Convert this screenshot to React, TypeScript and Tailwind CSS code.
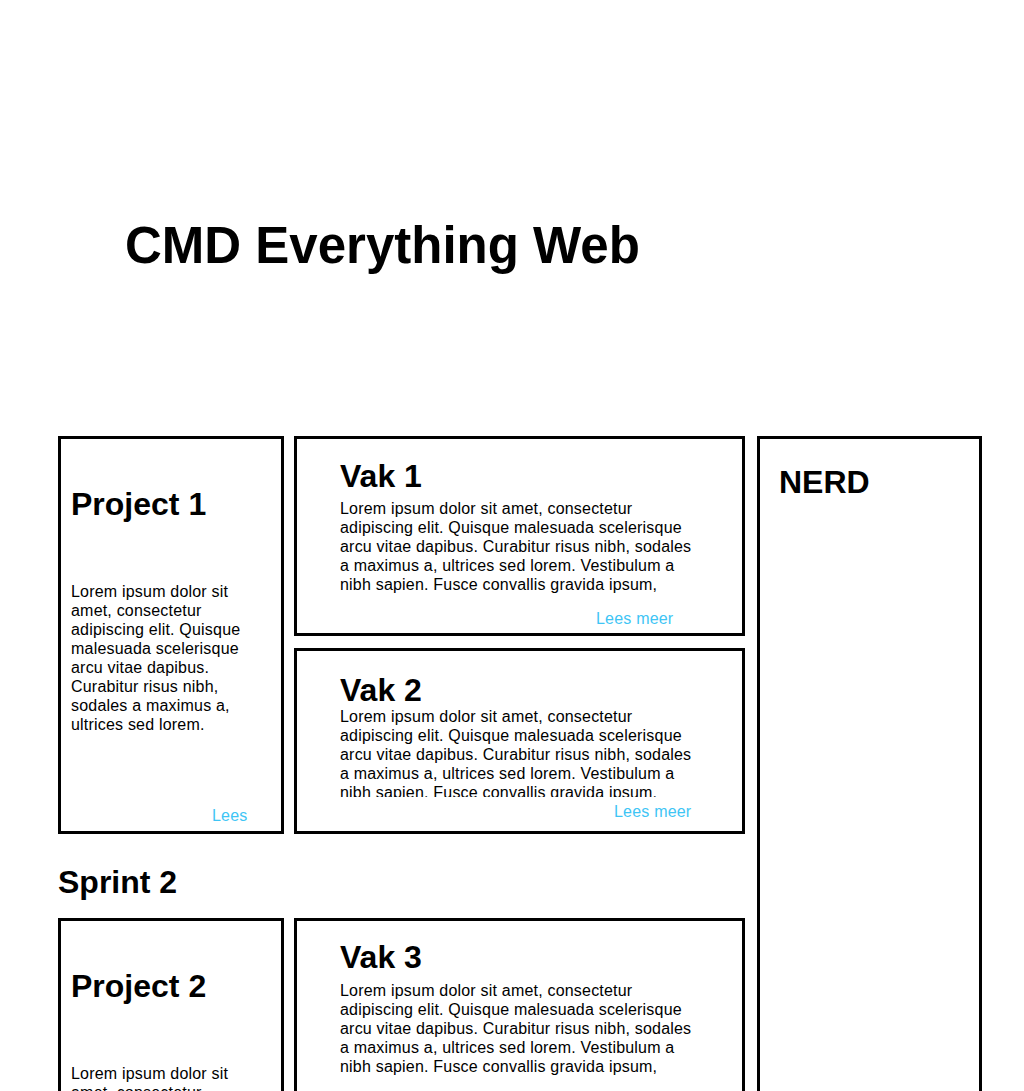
const lorem =
  "Lorem ipsum dolor sit amet, consectetur adipiscing elit. Quisque malesuada scelerisque arcu vitae dapibus. Curabitur risus nibh, sodales a maximus a, ultrices sed lorem. Vestibulum a nibh sapien. Fusce convallis gravida ipsum, consequat tempor nunc porta vel. Sed ut nisl vel lectus.";

const short =
  "Lorem ipsum dolor sit amet, consectetur adipiscing elit. Quisque malesuada scelerisque arcu vitae dapibus. Curabitur risus nibh, sodales a maximus a, ultrices sed lorem.";

function ProjectCard({ title }: { title: string }) {
  return (
    <div className="row-span-2 flex flex-col border-[3px] border-black pl-[10px]">
      <h2 className="mt-[49px] text-[32px] font-bold leading-none">{title}</h2>
      <p className="mt-[62px] w-[190px] text-[16px] leading-[19px] tracking-[0.2px]">{short}</p>
      <a
        href="#"
        className="mt-auto mb-[6px] ml-[141px] h-[19px] w-[60px] overflow-hidden text-[16px] leading-[19px] tracking-[0.2px] text-[#3ec5f5]"
      >
        Lees meer
      </a>
    </div>
  );
}

export default function App() {
  return (
    <div
      className="h-screen overflow-hidden bg-white text-black"
      style={{ fontFamily: '"Liberation Sans", Arial, sans-serif' }}
    >
      <header className="pt-[220px] pl-[125px]">
        <h1 className="text-[51px] font-bold leading-none">CMD Everything Web</h1>
      </header>

      <main className="mt-[165px] ml-[58px] flex gap-[12px]">
        <div className="w-[687px]">
          <div className="grid grid-cols-[226px_451px] gap-x-[10px] gap-y-[12px]">
            <ProjectCard title="Project 1" />

            {/* Vak 1 */}
            <div className="flex h-[200px] flex-col border-[3px] border-black pl-[43px]">
              <h2 className="mt-[21px] text-[32px] font-bold leading-none">Vak 1</h2>
              <p className="mt-[7px] h-[95px] w-[358px] overflow-hidden text-[16px] leading-[19px] tracking-[0.2px]">
                {lorem}
              </p>
              <a href="#" className="mt-[15px] ml-[256px] text-[16px] leading-[19px] tracking-[0.2px] text-[#3ec5f5]">
                Lees meer
              </a>
            </div>

            {/* Vak 2 */}
            <div className="flex h-[186px] flex-col border-[3px] border-black pl-[43px]">
              <h2 className="mt-[23px] text-[32px] font-bold leading-none">Vak 2</h2>
              <p className="mt-[1px] h-[90px] w-[358px] overflow-hidden text-[16px] leading-[19px] tracking-[0.2px]">
                {lorem}
              </p>
              <a href="#" className="mt-[5px] ml-[274px] text-[16px] leading-[19px] tracking-[0.2px] text-[#3ec5f5]">
                Lees meer
              </a>
            </div>
          </div>

          <h2 className="mt-[32px] text-[32px] font-bold leading-none">Sprint 2</h2>

          <div className="mt-[20px] grid grid-cols-[226px_451px] gap-x-[10px] gap-y-[12px]">
            <ProjectCard title="Project 2" />

            {/* Vak 3 */}
            <div className="flex h-[200px] flex-col border-[3px] border-black pl-[43px]">
              <h2 className="mt-[20px] text-[32px] font-bold leading-none">Vak 3</h2>
              <p className="mt-[8px] h-[95px] w-[358px] overflow-hidden text-[16px] leading-[19px] tracking-[0.2px]">
                {lorem}
              </p>
              <a href="#" className="mt-[12px] ml-[256px] text-[16px] leading-[19px] tracking-[0.2px] text-[#3ec5f5]">
                Lees meer
              </a>
            </div>

            <div className="h-[186px] border-[3px] border-black" />
          </div>
        </div>

        <aside className="w-[225px] border-[3px] border-black pl-[19px]">
          <h2 className="mt-[27px] text-[32px] font-bold leading-none">NERD</h2>
        </aside>
      </main>
    </div>
  );
}
